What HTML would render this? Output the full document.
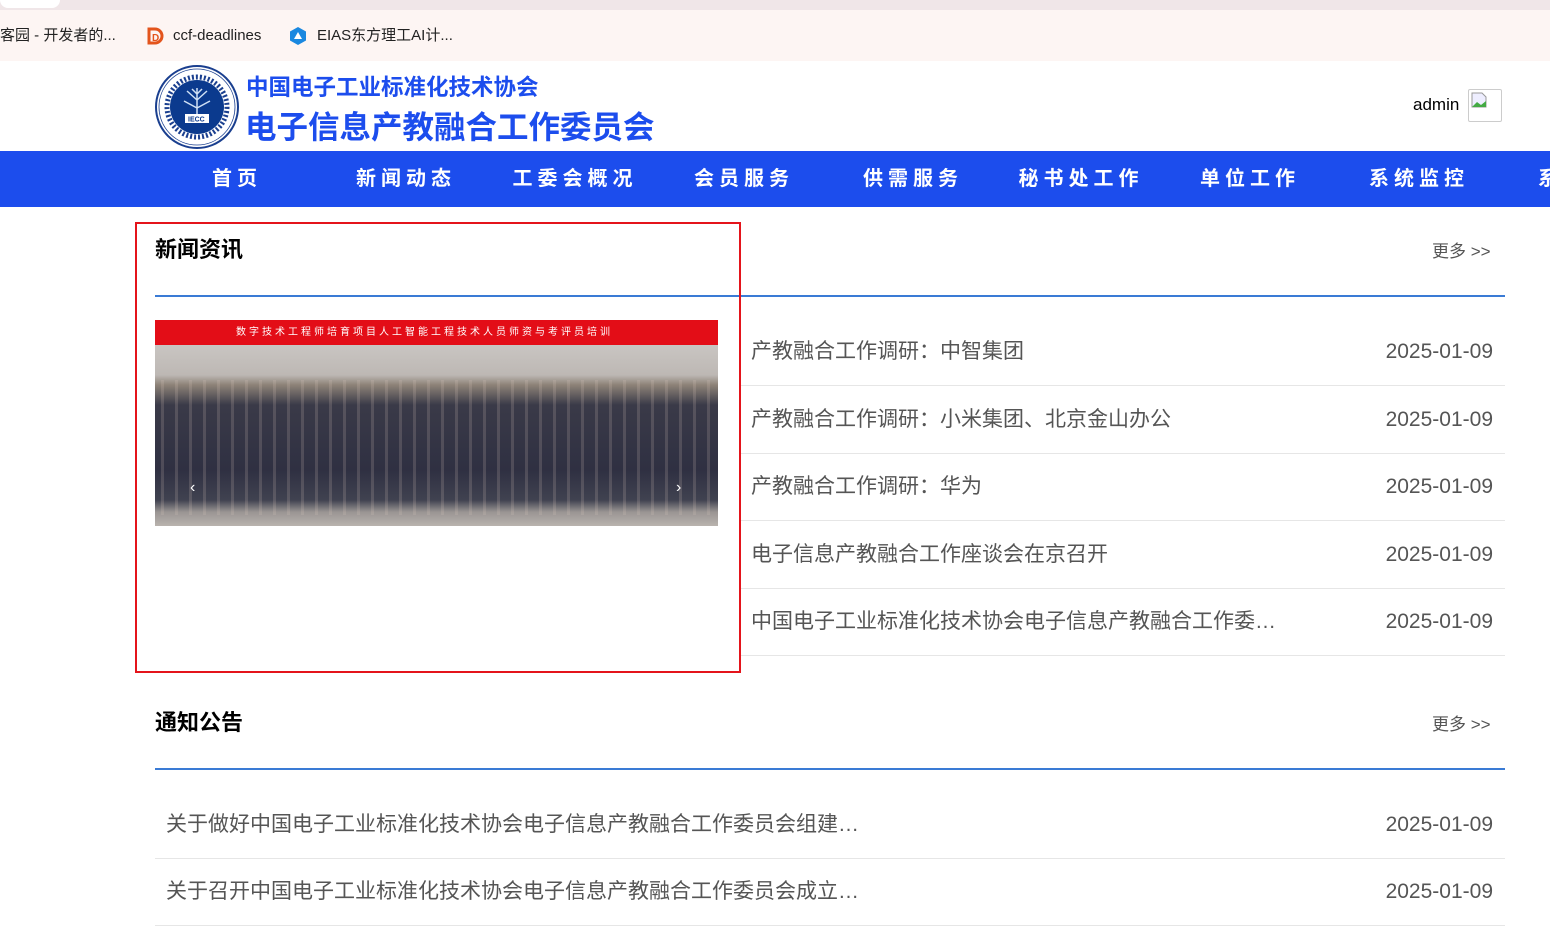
<!DOCTYPE html>
<html><head><meta charset="utf-8"><style>
*{margin:0;padding:0;box-sizing:border-box}
body{width:1550px;height:929px;overflow:hidden;background:#fff;font-family:"Liberation Sans","Noto Sans CJK SC",sans-serif;position:relative}
.a{position:absolute;white-space:nowrap;line-height:1}
.nav{position:absolute;left:0;top:151px;width:1550px;height:56px;background:#1c4ded}
.nav span{position:absolute;top:18px;line-height:20px;color:#fff;font-weight:bold;font-size:20px;letter-spacing:5px;transform:translateX(-50%)}
.row{position:absolute;left:741px;width:764px;height:67px;border-bottom:1px solid #e6e6e6}
.row2{position:absolute;left:155px;width:1350px;height:67px;border-bottom:1px solid #e6e6e6}
.t,.d{position:absolute;top:22px;font-size:21px;line-height:21px;color:#555;white-space:nowrap}
.row .t{left:10px}.row2 .t{left:11px}
.d{right:12px}
</style></head><body>
<div class="a" style="left:0;top:0;width:1550px;height:10px;background:#f0e6e8"></div>
<div class="a" style="left:0;top:0;width:60px;height:8px;background:#fff;border-radius:0 0 10px 10px"></div>
<div class="a" style="left:0;top:10px;width:1550px;height:51px;background:#fdf5f3"></div>
<div class="a" style="left:0;top:28px;font-size:15px;color:#222">客园 - 开发者的...</div>
<svg class="a" style="left:146px;top:27px" width="18" height="18"><path d="M3 2h6a7 7 0 0 1 0 14H3z" fill="none" stroke="#e3541c" stroke-width="3"/><text x="6" y="14" font-size="10" font-weight="bold" fill="#e3541c" font-family="Liberation Sans">D</text></svg>
<div class="a" style="left:173px;top:28px;font-size:15px;color:#222">ccf-deadlines</div>
<svg class="a" style="left:288px;top:26px" width="20" height="20"><path d="M10 1l8 4.5v9L10 19l-8-4.5v-9z" fill="#1a88e0"/><path d="M10 6l4 7H6z" fill="#fff"/></svg>
<div class="a" style="left:317px;top:28px;font-size:15px;color:#222">EIAS东方理工AI计...</div>

<svg class="a" style="left:154px;top:64px" width="86" height="86"><circle cx="43" cy="43" r="41" fill="#fff" stroke="#1a3f8f" stroke-width="2"/><circle cx="43" cy="43" r="38" fill="none" stroke="#1a3f8f" stroke-width="0.8"/><circle cx="43" cy="43" r="30" fill="none" stroke="#1a3f8f" stroke-width="5" stroke-dasharray="2 2"/><circle cx="43" cy="43" r="27" fill="#0b3a8e"/><path d="M43 58V24M43 36l-10-9M43 36l10-9M43 44l-13-7M43 44l13-7M43 30l-5-5M43 30l5-5" stroke="#cfe0f5" stroke-width="1.5"/><rect x="31" y="50" width="24" height="9" fill="#fff"/><text x="34" y="57.5" font-size="7" font-weight="bold" fill="#0b3a8e" font-family="Liberation Sans">IECC</text></svg>
<div class="a" style="left:246px;top:77px;font-size:22.5px;font-weight:bold;color:#1c4ded">中国电子工业标准化技术协会</div>
<div class="a" style="left:245px;top:112px;font-size:31.5px;font-weight:bold;color:#1c4ded">电子信息产教融合工作委员会</div>
<div class="a" style="left:1413px;top:96px;font-size:17px;color:#000">admin</div>
<div class="a" style="left:1468px;top:89px;width:34px;height:33px;border:1px solid #ccc;border-radius:2px"></div>
<svg class="a" style="left:1471px;top:92px" width="16" height="16"><path d="M1 1h10l4 4v10H1z" fill="#eef" stroke="#999"/><path d="M1 15l5-5 4 3 5-4v6z" fill="#4a4"/></svg>

<div class="nav">
<span style="left:237px">首页</span><span style="left:406px">新闻动态</span><span style="left:575px">工委会概况</span><span style="left:744px">会员服务</span><span style="left:913px">供需服务</span><span style="left:1081px">秘书处工作</span><span style="left:1250px">单位工作</span><span style="left:1419px">系统监控</span><span style="left:1538px;transform:none">系</span>
</div>

<div class="a" style="left:155px;top:239px;font-size:22px;font-weight:bold;color:#000">新闻资讯</div>
<div class="a" style="left:1432px;top:243px;font-size:17px;color:#555">更多 &gt;&gt;</div>
<div class="a" style="left:155px;top:295px;width:1350px;height:2px;background:#3a7bd5"></div>

<div class="a" style="left:155px;top:320px;width:563px;height:206px;background:linear-gradient(#e30d17 0,#e30d17 25px,#c9c5c2 25px,#bdb8b4 55px,#8d8277 65px,#3a3a48 85px,#2f3042 150px,#404250 180px,#9a9593 192px,#b9b3ae 206px)"></div>
<div class="a" style="left:155px;top:380px;width:563px;height:135px;background:repeating-linear-gradient(90deg,rgba(255,255,255,.0) 0 6px,rgba(220,200,190,.18) 6px 9px,rgba(0,0,0,0) 9px 14px)"></div>
<div class="a" style="left:236px;top:328px;font-size:10px;color:#fff;letter-spacing:3px">数字技术工程师培育项目人工智能工程技术人员师资与考评员培训</div>
<div class="a" style="left:190px;top:480px;color:#fff;font-size:16px">‹</div>
<div class="a" style="left:676px;top:480px;color:#fff;font-size:16px">›</div>
<div class="a" style="left:135px;top:222px;width:606px;height:451px;border:2px solid #e4141b"></div>

<div class="row" style="top:319px"><span class="t">产教融合工作调研：中智集团</span><span class="d">2025-01-09</span></div>
<div class="row" style="top:387px"><span class="t">产教融合工作调研：小米集团、北京金山办公</span><span class="d">2025-01-09</span></div>
<div class="row" style="top:454px"><span class="t">产教融合工作调研：华为</span><span class="d">2025-01-09</span></div>
<div class="row" style="top:522px"><span class="t">电子信息产教融合工作座谈会在京召开</span><span class="d">2025-01-09</span></div>
<div class="row" style="top:589px"><span class="t">中国电子工业标准化技术协会电子信息产教融合工作委…</span><span class="d">2025-01-09</span></div>

<div class="a" style="left:155px;top:712px;font-size:22px;font-weight:bold;color:#000">通知公告</div>
<div class="a" style="left:1432px;top:716px;font-size:17px;color:#555">更多 &gt;&gt;</div>
<div class="a" style="left:155px;top:768px;width:1350px;height:2px;background:#3a7bd5"></div>
<div class="row2" style="top:792px"><span class="t">关于做好中国电子工业标准化技术协会电子信息产教融合工作委员会组建…</span><span class="d">2025-01-09</span></div>
<div class="row2" style="top:859px"><span class="t">关于召开中国电子工业标准化技术协会电子信息产教融合工作委员会成立…</span><span class="d">2025-01-09</span></div>
</body></html>
